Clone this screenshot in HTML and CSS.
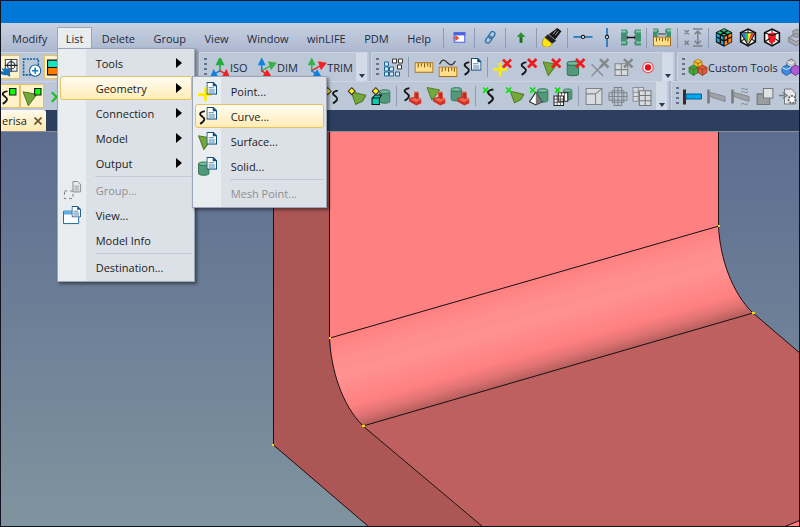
FILE: index.html
```html
<!DOCTYPE html>
<html lang="en">
<head>
	<meta charset="utf-8">
	<title>Model viewer</title>
	<link rel="stylesheet" href="styles.css">
</head>
<body>
	<svg class="sprite" aria-hidden="true">
		<!-- shared parts -->
		<symbol id="doc" viewBox="0 0 10 12"><path d="M.5.5h6l3 3v8h-9z" fill="#fff" stroke="#0f4f80"/><path d="M6 0v4h4z" fill="#0f4f80"/><path d="M2 5.500h5M2 7.500h6M2 9.500h6" stroke="#4d83ab"/></symbol>
		<symbol id="redx" viewBox="0 0 10 10"><path d="M1 1l8 8M9 1L1 9" stroke="#ee1c1c" stroke-width="2.600"/></symbol>
		<symbol id="greenx" viewBox="0 0 6 6"><path d="M.5.5l5 5M5.500.5l-5 5" stroke="#0be00b" stroke-width="1.600"/></symbol>
		<symbol id="squiggle" viewBox="0 0 8 14"><path d="M6.500 1C1 2 1 4 4 6s3 4-2 7" fill="none" stroke="#151515" stroke-width="1.700"/></symbol>
		<symbol id="tri" viewBox="0 0 14 14"><path d="M.5.5L13.500 3 5.500 13.500z" fill="#75a83c" stroke="#4f7c26"/></symbol>
		<symbol id="patch" viewBox="0 0 14 13"><path d="M.5 1.500L13.500 4.500l-3 5-6 3z" fill="#75a83c" stroke="#4f7c26"/></symbol>
		<symbol id="cyl" viewBox="0 0 12 15"><path d="M.5 2.500v10c0 2.500 11 2.500 11 0v-10z" fill="#52987b" stroke="#2f7257"/><ellipse cx="6" cy="2.500" rx="5.500" ry="2" fill="#78b89c" stroke="#2f7257"/></symbol>
		<symbol id="diamond" viewBox="0 0 8 8"><path d="M4 .7L7.300 4 4 7.300.7 4z" fill="#ffee10" stroke="#333"/></symbol>
		<symbol id="brick" viewBox="0 0 12 13"><path d="M5 0l4 0 0 5 3 2v4l-5 2-7-4V6l5-1z" fill="#cf3325"/><path d="M5 0l1 6-5 1 6 3 5-3-3-2V0z" fill="#ee6551"/><path d="M6 1v5l3 1V1z" fill="#bd281b"/></symbol>
		<symbol id="cube" viewBox="0 0 18 18"><path d="M9 1l7 3.500v8.500l-7 4-7-4V4.500z" fill="#fff" stroke="#111" stroke-width="1.500"/></symbol>
		<symbol id="rule" viewBox="0 0 18 10"><path d="M.5.5h17v9H.5z" fill="#ffdf8c" stroke="#a86d10"/><path d="M3.500 1v4M6.500 1v3M9.500 1v4M12.500 1v3M15 1v4" stroke="#8b5a0a"/></symbol>

		<!-- menu bar icons -->
		<symbol id="i-import" viewBox="0 0 18 18"><path d="M4.500 4.500h10v9h-10z" fill="#fff" stroke="#4763e0"/><path d="M4 4h11v3H4z" fill="#4763e0"/><path d="M3 9.500h4M6 7.500l2.500 2L6 11.500z" fill="#ef4b29" stroke="#ef4b29"/></symbol>
		<symbol id="i-link" viewBox="0 0 18 18"><g fill="none" stroke="#2f78ad" stroke-width="1.300"><rect x="8.500" y="3" width="4.500" height="7" rx="2.200" transform="rotate(35 10.500 6.500)"/><rect x="5.500" y="7.500" width="4.500" height="7" rx="2.200" transform="rotate(35 7.700 11)"/></g></symbol>
		<symbol id="i-up" viewBox="0 0 18 18"><path d="M9 4l4 4.500h-2.500V14h-3V8.500H5z" fill="#2c8e2c"/><path d="M9 9v5" stroke="#174f17"/></symbol>
		<symbol id="i-torch" viewBox="0 0 18 18"><path d="M14 0l4 3-6 8-6-5z" fill="#151515"/><path d="M5 6l8 6-4 3-7-6z" fill="#222"/><path d="M2 9l7 6c-1 4-8 4-9 1 0-3 0-5 2-7z" fill="#ffe414" stroke="#a48900" stroke-width=".7"/><path d="M10 6l3-4M12 7l3-4" stroke="#ccc" stroke-width=".7"/></symbol>
		<symbol id="i-hline" viewBox="0 0 18 18"><path d="M0 8.500h18" stroke="#1570b8" stroke-width="1.500"/><circle cx="9" cy="8.500" r="1.500" fill="#fff" stroke="#111"/></symbol>
		<symbol id="i-vline" viewBox="0 0 18 18"><path d="M9 0v18" stroke="#1570b8" stroke-width="1.500"/><circle cx="9" cy="8.500" r="1.500" fill="#fff" stroke="#111"/></symbol>
		<symbol id="i-span" viewBox="0 0 20 18"><path d="M0 1h6l1 3-2 4v3l2 3-1 3H0zM20 1h-6l-1 3 2 4v3l-2 3 1 3h6z" fill="#3d9270"/><path d="M0 3h5M0 14h5M15 3h5M15 14h5" stroke="#8cc4aa" stroke-width="2"/><path d="M6 9h8" stroke="#111" stroke-width="1.500"/><path d="M6 7v4M14 7v4" stroke="#111"/></symbol>
		<symbol id="i-spanrule" viewBox="0 0 20 18"><path d="M1 0h5l1 3-2 3 2 3H1zM19 0h-5l-1 3 2 3-2 3h6z" fill="#3d9270"/><path d="M1 2h4M15 2h4" stroke="#8cc4aa" stroke-width="2"/><path d="M6 5.500h8" stroke="#333"/><use href="#rule" x="1" y="8" width="18" height="10"/></symbol>
		<symbol id="i-height" viewBox="0 0 18 18"><path d="M1 2l4 4M5 2L1 6M1 12l4 4M5 12l-4 4M9 1h9M9 17h9M13.500 3v12M10.500 6l3-3 3 3M10.500 12l3 3 3-3" fill="none" stroke="#7b8187" stroke-width="1.400"/></symbol>
		<symbol id="i-cube1" viewBox="0 0 18 18"><use href="#cube"/><path d="M2 5l7 3v8l-7-4z" fill="#16a6dc"/><path d="M9 8l7-3v8l-7 4z" fill="#ff8a1e"/><path d="M9 1l7 3.500L9 8 2 4.500z" fill="#28c37b"/><path d="M5.500 2.500l7 4v8M12.500 2.500l-7 4v8M2 8.500l7 4 7-4M9 8v9M2 4.500L9 8l7-3.500" fill="none" stroke="#111" stroke-width="1.300"/></symbol>
		<symbol id="i-cube2" viewBox="0 0 18 18"><use href="#cube"/><path d="M3 5h4v7z" fill="#2274e0"/><path d="M6 5h4l-1 9-2-2z" fill="#20bd5d"/><path d="M9 5h4l-4 9z" fill="#ffe629"/><path d="M12 5h3l-6 9z" fill="#ef3322"/><path d="M2 4.500h14L9 16zM9 1v4M2 13l4-3M16 13l-4-3" fill="none" stroke="#111"/></symbol>
		<symbol id="i-cube3" viewBox="0 0 18 18"><use href="#cube"/><path d="M5 6l4-2 4 1-1 8-4 2-2-2z" fill="#ec1d24"/><path d="M2 4.500L9 7l7-2.500M2 13l5-3M16 13l-4-3M9 1v3M9 14v3" fill="none" stroke="#111"/></symbol>
		<symbol id="i-cube4" viewBox="0 0 18 18"><path d="M2 9l7-4 7 4-7 4zM2 9v4l7 4 7-4V9M6 3l4-2 4 2v4l-4 2-4-2z" fill="#a7abb0" stroke="#858a91"/></symbol>

		<!-- toolbar icons -->
		<symbol id="i-rotate" viewBox="0 0 18 18"><path d="M6.500 1.500h11v11h-11z" fill="#eef3f8" stroke="#454f5c"/><circle cx="12" cy="7" r="3.500" fill="none" stroke="#222"/><path d="M12 1v12M6 7h12" stroke="#222"/><path d="M0 8c0 4 3 5 5 5l-2-3h8v8l-3-2c-4 1-7-1-8-4z" fill="#1972c0"/></symbol>
		<symbol id="i-zoombox" viewBox="0 0 18 18"><path d="M1 1h14v15H1z" fill="none" stroke="#16619c" stroke-width="1.500" stroke-dasharray="2 1"/><circle cx="12" cy="12" r="5.300" fill="#fff" stroke="#16619c"/><path d="M12 9v6M9 12h6" stroke="#1b7bc2" stroke-width="1.500"/></symbol>
		<symbol id="i-colors" viewBox="0 0 18 18"><path d="M1 2h16v7H1z" fill="#1de0bc" stroke="#111"/><path d="M1 9h16v7H1z" fill="#ff7c00" stroke="#111"/></symbol>
		<symbol id="i-iso" viewBox="0 0 18 18"><path d="M9 13V5M6 6l3-6 3 6z" fill="#22ad3d" stroke="#22ad3d" stroke-width="1.500"/><path d="M9 12l-5 3M1 17l2-5 3 5z" fill="#1183df" stroke="#1183df" stroke-width="1.500"/><path d="M9 12l5 3M17 17l-5 0 3-5z" fill="#ee2525" stroke="#ee2525" stroke-width="1.500"/></symbol>
		<symbol id="i-dim" viewBox="0 0 18 18"><path d="M4 13V5M1.500 6L4 1l2.500 5z" fill="#1183df" stroke="#1183df" stroke-width="1.500"/><path d="M4 12l9-5M11 4l6 1-4 5z" fill="#38b248" stroke="#38b248" stroke-width="1.500"/><path d="M4 12l5 4M6 17l3-5 3 5z" fill="#ee2525" stroke="#ee2525" stroke-width="1.500"/></symbol>
		<symbol id="i-trim" viewBox="0 0 18 18"><path d="M4 13V5M1.500 6L4 1l2.500 5z" fill="#38b248" stroke="#38b248" stroke-width="1.500"/><path d="M4 12l9-5M11 4l6 1-4 5z" fill="#ee2525" stroke="#ee2525" stroke-width="1.500"/><path d="M4 12l5 4M6 17l3-5 3 5z" fill="#1183df" stroke="#1183df" stroke-width="1.500"/></symbol>
		<symbol id="i-blocks" viewBox="0 0 20 18"><g fill="#d7e7f2" stroke="#1c6595"><path d="M1.500 3.500h4v4h-4zM1.500 8.500h4v4h-4zM1.500 13.500h4v4h-4zM6.500 8.500h4v4h-4zM6.500 13.500h4v4h-4zM12.500 13.500h4v4h-4z"/></g><path d="M9.500.5h4v4h-4zM15.500.5h4v4h-4zM14.500 6.500h4v4h-4z" fill="#fff" stroke="#333"/></symbol>
		<symbol id="i-ruler" viewBox="0 0 18 18"><use href="#rule" y="3" width="18" height="12"/></symbol>
		<symbol id="i-curverule" viewBox="0 0 18 18"><path d="M1 6c3-6 5-4 8-1s5 1 7-2" fill="none" stroke="#333" stroke-width="1.200"/><use href="#rule" y="8" width="18" height="10"/></symbol>
		<symbol id="i-curvedoc" viewBox="0 0 18 18"><use href="#squiggle" x="0" y="3" width="8" height="14"/><use href="#doc" x="8" y="0" width="10" height="12"/></symbol>
		<symbol id="i-pointx" viewBox="0 0 20 18"><path d="M7 4v14M0 11h14" stroke="#ffed00" stroke-width="2.500"/><use href="#redx" x="9" y="0" width="10" height="10"/></symbol>
		<symbol id="i-curvex" viewBox="0 0 18 18"><use href="#squiggle" x="1" y="3" width="8" height="14"/><use href="#redx" x="8" y="0" width="10" height="10"/></symbol>
		<symbol id="i-surfx" viewBox="0 0 18 18"><use href="#tri" x="0" y="3" width="14" height="14"/><use href="#redx" x="8" y="0" width="10" height="10"/></symbol>
		<symbol id="i-solidx" viewBox="0 0 18 18"><use href="#cyl" x="0" y="2" width="12" height="16"/><use href="#redx" x="8" y="0" width="10" height="10"/></symbol>
		<symbol id="i-greyx" viewBox="0 0 18 18"><path d="M1 6l11 11M12 6L1 17" stroke="#8a8d91" stroke-width="1.300"/><path d="M9 1l8 8M17 1L9 9" stroke="#85888c" stroke-width="2.400"/></symbol>
		<symbol id="i-gridx" viewBox="0 0 18 18"><path d="M.5 5.500h12v11H.5zM.5 11h12M6.500 5.500v11" fill="#d7dadd" stroke="#7f8387"/><path d="M9 1l8 8M17 1L9 9" stroke="#85888c" stroke-width="2.400"/></symbol>
		<symbol id="i-record" viewBox="0 0 18 18"><circle cx="9" cy="9" r="5" fill="#fff" stroke="#ef4444"/><circle cx="9" cy="9" r="3" fill="#e60f1c"/></symbol>
		<symbol id="i-custom" viewBox="0 0 20 18"><g stroke-width=".7"><path d="M6 3l4-2.500L14 3v5l-4 2-4-2z" fill="#f8be26" stroke="#a7790c"/><path d="M1 9l4.500-2.500L10 9v5l-4.500 3L1 14z" fill="#46a53f" stroke="#256b20"/><path d="M10 9l4.500-2.500L19 9v5l-4.500 3-4.500-3z" fill="#e6553c" stroke="#9b2516"/><path d="M6 3l4 2 4-2M10 5v5M1 9l4.500 2L10 9l4.500 2L19 9M5.500 11v6M14.500 11v6" fill="none" stroke="#6d4a20"/></g></symbol>
		<symbol id="i-custom2" viewBox="0 0 20 18"><g stroke-width=".8"><path d="M6 3l4-2.500L14 3v5l-4 2-4-2z" fill="#c3c6cb" stroke="#555"/><path d="M1 9l4.500-2.500L10 9v5l-4.500 3L1 14z" fill="#3b8be5" stroke="#1e508c"/><path d="M10 9l4.500-2.500L19 9v5l-4.500 3-4.500-3z" fill="#ad5bd6" stroke="#652a85"/><path d="M1 9l4.500 2L10 9M6 3l4 2 4-2" fill="none" stroke="#fff"/></g></symbol>
		<symbol id="i-curveg" viewBox="0 0 18 18"><use href="#squiggle" x="2" y="3" width="8" height="14"/><path d="M10.500 1.500h6v6h-6z" fill="#0aff0a" stroke="#111"/></symbol>
		<symbol id="i-surfg" viewBox="0 0 18 18"><use href="#tri" x="0" y="4" width="14" height="14"/><path d="M11.500 1.500h6v6h-6z" fill="#0aff0a" stroke="#111"/></symbol>
		<symbol id="i-green" viewBox="0 0 18 18"><path d="M5 5l9 9M14 5l-9 9" stroke="#1dbd1d" stroke-width="2"/></symbol>
		<symbol id="i-curved" viewBox="0 0 18 18"><use href="#diamond" x="0" y="0" width="8" height="8"/><use href="#squiggle" x="7" y="2" width="8" height="15"/></symbol>
		<symbol id="i-surfd" viewBox="0 0 18 18"><use href="#patch" x="3" y="3" width="15" height="14"/><use href="#diamond" x="0" y="0" width="8" height="8"/></symbol>
		<symbol id="i-solidd" viewBox="0 0 18 18"><use href="#cyl" x="7" y="1" width="11" height="16"/><path d="M.5 10.500l3-3h6l-2 3v6h-7zM.5 10.500h7" fill="#10c9ad" stroke="#111"/><use href="#diamond" x="0" y="0" width="8" height="8"/></symbol>
		<symbol id="i-curveb" viewBox="0 0 18 18"><use href="#squiggle" x="0" y="0" width="8" height="14"/><use href="#brick" x="6" y="4" width="12" height="14"/></symbol>
		<symbol id="i-surfb" viewBox="0 0 18 18"><use href="#tri" x="0" y="0" width="13" height="13"/><use href="#brick" x="6" y="4" width="12" height="14"/></symbol>
		<symbol id="i-solidb" viewBox="0 0 18 18"><use href="#cyl" x="0" y="0" width="11" height="14"/><use href="#brick" x="6" y="4" width="12" height="14"/></symbol>
		<symbol id="i-curven" viewBox="0 0 18 18"><use href="#greenx" x="1" y="0" width="6" height="6"/><use href="#squiggle" x="4" y="1" width="9" height="16"/></symbol>
		<symbol id="i-surfn" viewBox="0 0 18 18"><use href="#patch" x="4" y="2" width="14" height="14"/><use href="#greenx" x="0" y="0" width="6" height="6"/></symbol>
		<symbol id="i-solidn" viewBox="0 0 18 18"><use href="#cyl" x="7" y="0" width="11" height="16"/><path d="M6 5l6 9-6 3-6-3z" fill="#fff" stroke="#222"/><path d="M6 5l6 9-6 3z" fill="#777"/><use href="#greenx" x="0" y="0" width="6" height="6"/></symbol>
		<symbol id="i-meshn" viewBox="0 0 18 18"><use href="#cyl" x="9" y="0" width="9" height="14"/><path d="M4.500 5.500h9v8h-9zM.5 8.500h9v9h-9z" fill="#fff" stroke="#222"/><path d="M.5 11.500h9M.5 14.500h9M3.500 8.500v9M6.500 8.500v9M7.500 5.500v3M10.500 5.500v8" fill="none" stroke="#444" stroke-width=".8"/><use href="#greenx" x="1" y="0" width="6" height="6"/></symbol>
		<symbol id="i-grid1" viewBox="0 0 18 18"><path d="M1.500 1.500h15v15h-15zM1.500 6.500h9v10M10.500 6.500l6-5" fill="#d9dcdf" stroke="#808489"/></symbol>
		<symbol id="i-grid2" viewBox="0 0 18 18"><path d="M5.500.5h7v17h-7zM.5 5.500h17v7H.5zM9 .5v17M.5 9h17M3.500 3.500h11v11h-11z" fill="none" stroke="#808489"/></symbol>
		<symbol id="i-grid3" viewBox="0 0 18 18"><path d="M.5.500h10v13H.5zM.5 5h10M.5 9h10M5.500.5v13" fill="#d9dcdf" stroke="#8d9196"/><path d="M6.500 3.500h11v14h-11zM6.500 8h11M6.500 13h11M12 3.500v14" fill="#d9dcdf" stroke="#74787d"/></symbol>
		<symbol id="i-beam" viewBox="0 0 20 18"><path d="M1.500 2v15" stroke="#3a2925" stroke-width="3"/><path d="M3 6.500h15.500v5H3z" fill="#00a9ef" stroke="#075c91"/></symbol>
		<symbol id="i-beam2" viewBox="0 0 20 18"><path d="M1.500 2v14" stroke="#777b80" stroke-width="2.500"/><path d="M3 5l15 4v5L3 9z" fill="#a0a4a9" stroke="#84888d"/></symbol>
		<symbol id="i-beam3" viewBox="0 0 20 18"><path d="M1.500 2v14" stroke="#777b80" stroke-width="2.500"/><path d="M3 5l15 4v5L3 9z" fill="#a0a4a9" stroke="#84888d"/><path d="M10 2c3-3 4 2 7-1M10 5c3-3 4 2 7-1M10 17c3-3 4 2 7-1" fill="none" stroke="#85898e"/></symbol>
		<symbol id="i-copy" viewBox="0 0 18 18"><path d="M1.500 6.500h12v10h-12z" fill="#9a9ea3" stroke="#74787d"/><path d="M7.500 1.500h9v9h-9z" fill="#dfe2e5" stroke="#74787d"/></symbol>
		<symbol id="i-gear" viewBox="0 0 20 18"><path d="M5.500 1.500h7l4 4v11h-11z" fill="#e5e7e9" stroke="#777b80"/><path d="M0 8h6M4 5l4 3-4 3" fill="none" stroke="#777b80" stroke-width="1.500"/><circle cx="13" cy="12" r="3.500" fill="#fff" stroke="#666a70" stroke-width="2" stroke-dasharray="2 1"/></symbol>

		<!-- drop-down menu icons -->
		<symbol id="m-point" viewBox="0 0 18 18"><path d="M7 5v13M0 12h13" stroke="#ffed00" stroke-width="2.500"/><use href="#doc" x="8" y="0" width="10" height="12"/></symbol>
		<symbol id="m-surface" viewBox="0 0 18 18"><use href="#tri" x="0" y="3" width="14" height="14"/><use href="#doc" x="8" y="0" width="10" height="12"/></symbol>
		<symbol id="m-solid" viewBox="0 0 18 18"><use href="#cyl" x="0" y="4" width="11" height="14"/><use href="#doc" x="8" y="0" width="10" height="12"/></symbol>
		<symbol id="m-group" viewBox="0 0 20 20"><path d="M1.500 10.500h9v8h-9z" fill="none" stroke="#777" stroke-dasharray="3 3"/><path d="M10.500.5h5l3 3v8h-8z" fill="#e6e8eb" stroke="#85898e"/><path d="M12 5.500h5M12 7.500h5M12 9.500h5" stroke="#9a9da2"/></symbol>
		<symbol id="m-view" viewBox="0 0 20 20"><path d="M.5 5.500h16v13H.5z" fill="#fff" stroke="#15659b"/><path d="M1 5h15v4H1z" fill="#5daee5"/><use href="#doc" x="9" y="0" width="10" height="12"/></symbol>
	</svg>

	<div class="titlebar"></div>

	<header class="menubar">
		<nav class="menus">
			<div class="menu"><button class="menu-title">Modify</button></div>
			<div class="menu open">
				<button class="menu-title">List</button>
				<ul class="dropdown">
					<li><button class="entry">Tools<span class="arrow"></span></button></li>
					<li class="parent">
						<button class="entry active">Geometry<span class="arrow"></span></button>
						<ul class="dropdown submenu">
							<li><button class="entry"><svg class="entry-icon"><use href="#m-point"/></svg>Point...</button></li>
							<li><button class="entry active"><svg class="entry-icon"><use href="#i-curvedoc"/></svg>Curve...</button></li>
							<li><button class="entry"><svg class="entry-icon"><use href="#m-surface"/></svg>Surface...</button></li>
							<li><button class="entry"><svg class="entry-icon"><use href="#m-solid"/></svg>Solid...</button></li>
							<li class="divider"></li>
							<li><button class="entry" disabled>Mesh Point...</button></li>
						</ul>
					</li>
					<li><button class="entry">Connection<span class="arrow"></span></button></li>
					<li><button class="entry">Model<span class="arrow"></span></button></li>
					<li><button class="entry">Output<span class="arrow"></span></button></li>
					<li class="divider"></li>
					<li><button class="entry" disabled><svg class="entry-icon"><use href="#m-group"/></svg>Group...</button></li>
					<li><button class="entry"><svg class="entry-icon"><use href="#m-view"/></svg>View...</button></li>
					<li><button class="entry">Model Info</button></li>
					<li class="divider"></li>
					<li><button class="entry">Destination...</button></li>
				</ul>
			</div>
			<div class="menu"><button class="menu-title">Delete</button></div>
			<div class="menu"><button class="menu-title">Group</button></div>
			<div class="menu"><button class="menu-title">View</button></div>
			<div class="menu"><button class="menu-title">Window</button></div>
			<div class="menu"><button class="menu-title">winLIFE</button></div>
			<div class="menu"><button class="menu-title">PDM</button></div>
			<div class="menu"><button class="menu-title">Help</button></div>
		</nav>
		<span class="sep"></span>
		<button class="tool" aria-label="Import"><svg><use href="#i-import"/></svg></button>
		<span class="sep"></span>
		<button class="tool" aria-label="Link"><svg><use href="#i-link"/></svg></button>
		<span class="sep"></span>
		<button class="tool" aria-label="Up"><svg><use href="#i-up"/></svg></button>
		<span class="sep"></span>
		<button class="tool" aria-label="Highlight"><svg><use href="#i-torch"/></svg></button>
		<span class="sep"></span>
		<button class="tool" aria-label="Horizontal"><svg><use href="#i-hline"/></svg></button>
		<button class="tool" aria-label="Vertical"><svg><use href="#i-vline"/></svg></button>
		<button class="tool" aria-label="Span"><svg><use href="#i-span"/></svg></button>
		<span class="sep"></span>
		<button class="tool" aria-label="Measure span"><svg><use href="#i-spanrule"/></svg></button>
		<span class="sep"></span>
		<button class="tool" aria-label="Height"><svg><use href="#i-height"/></svg></button>
		<span class="sep"></span>
		<button class="tool" aria-label="Mesh cube"><svg><use href="#i-cube1"/></svg></button>
		<button class="tool" aria-label="Contour cube"><svg><use href="#i-cube2"/></svg></button>
		<button class="tool" aria-label="Section cube"><svg><use href="#i-cube3"/></svg></button>
		<button class="tool" aria-label="Exploded cube"><svg><use href="#i-cube4"/></svg></button>
	</header>

	<div class="toolrow">
		<div class="toolbar views">
			<button class="tool on" aria-label="Rotate"><svg><use href="#i-rotate"/></svg></button>
			<button class="tool" aria-label="Zoom box"><svg><use href="#i-zoombox"/></svg></button>
			<button class="tool on" aria-label="Colors"><svg><use href="#i-colors"/></svg></button>
		</div>
		<div class="toolbar axes">
			<span class="grip"></span>
			<div class="tools">
				<button class="tool wide"><svg><use href="#i-iso"/></svg>ISO</button>
				<button class="tool wide"><svg><use href="#i-dim"/></svg>DIM</button>
				<button class="tool wide"><svg><use href="#i-trim"/></svg>TRIM</button>
			</div>
			<button class="overflow" aria-label="More"></button>
		</div>
		<div class="toolbar geometry">
			<span class="grip"></span>
			<div class="tools">
				<button class="tool" aria-label="Blocks"><svg><use href="#i-blocks"/></svg></button>
				<span class="sep"></span>
				<button class="tool" aria-label="Ruler"><svg><use href="#i-ruler"/></svg></button>
				<button class="tool" aria-label="Curve length"><svg><use href="#i-curverule"/></svg></button>
				<button class="tool" aria-label="List curve"><svg><use href="#i-curvedoc"/></svg></button>
				<span class="sep"></span>
				<button class="tool" aria-label="Delete point"><svg><use href="#i-pointx"/></svg></button>
				<button class="tool" aria-label="Delete curve"><svg><use href="#i-curvex"/></svg></button>
				<button class="tool" aria-label="Delete surface"><svg><use href="#i-surfx"/></svg></button>
				<button class="tool" aria-label="Delete solid"><svg><use href="#i-solidx"/></svg></button>
				<button class="tool" aria-label="Delete node"><svg><use href="#i-greyx"/></svg></button>
				<button class="tool" aria-label="Delete element"><svg><use href="#i-gridx"/></svg></button>
				<button class="tool" aria-label="Record"><svg><use href="#i-record"/></svg></button>
			</div>
			<button class="overflow" aria-label="More"></button>
		</div>
		<div class="toolbar custom">
			<span class="grip"></span>
			<button class="tool wide"><svg><use href="#i-custom"/></svg>Custom Tools</button>
			<button class="tool" aria-label="Tool sets"><svg><use href="#i-custom2"/></svg></button>
		</div>
	</div>

	<div class="toolrow">
		<div class="toolbar entities">
			<div class="tools">
				<button class="tool on" aria-label="Show curves"><svg><use href="#i-curveg"/></svg></button>
				<button class="tool on" aria-label="Show surfaces"><svg><use href="#i-surfg"/></svg></button>
				<button class="tool" aria-label="Show nodes"><svg><use href="#i-green"/></svg></button>
			</div>
			<div class="tools end">
				<button class="tool" aria-label="Curve point"><svg><use href="#i-curved"/></svg></button>
				<button class="tool" aria-label="Surface point"><svg><use href="#i-surfd"/></svg></button>
				<button class="tool" aria-label="Solid point"><svg><use href="#i-solidd"/></svg></button>
				<span class="sep"></span>
				<button class="tool" aria-label="Curve property"><svg><use href="#i-curveb"/></svg></button>
				<button class="tool" aria-label="Surface property"><svg><use href="#i-surfb"/></svg></button>
				<button class="tool" aria-label="Solid property"><svg><use href="#i-solidb"/></svg></button>
				<span class="sep"></span>
				<button class="tool" aria-label="Mesh curve"><svg><use href="#i-curven"/></svg></button>
				<button class="tool" aria-label="Mesh surface"><svg><use href="#i-surfn"/></svg></button>
				<button class="tool" aria-label="Mesh solid"><svg><use href="#i-solidn"/></svg></button>
				<button class="tool" aria-label="Hex mesh"><svg><use href="#i-meshn"/></svg></button>
				<span class="sep"></span>
				<button class="tool" aria-label="Split mesh"><svg><use href="#i-grid1"/></svg></button>
				<button class="tool" aria-label="Refine mesh"><svg><use href="#i-grid2"/></svg></button>
				<button class="tool" aria-label="Copy mesh"><svg><use href="#i-grid3"/></svg></button>
			</div>
			<button class="overflow" aria-label="More"></button>
		</div>
		<div class="toolbar post">
			<span class="grip"></span>
			<button class="tool" aria-label="Beam"><svg><use href="#i-beam"/></svg></button>
			<button class="tool" aria-label="Deform"><svg><use href="#i-beam2"/></svg></button>
			<button class="tool" aria-label="Animate"><svg><use href="#i-beam3"/></svg></button>
			<button class="tool" aria-label="Copy"><svg><use href="#i-copy"/></svg></button>
			<button class="tool" aria-label="Output settings"><svg><use href="#i-gear"/></svg></button>
		</div>
	</div>

	<div class="tabs">
		<div class="tab">erisa
			<button class="close" aria-label="Close"><svg viewBox="0 0 8 8"><path d="M.5.5l7 7M7.500.5l-7 7" stroke="#6d5430" stroke-width="1.700"/></svg></button>
		</div>
	</div>

	<main class="viewport">
		<svg class="model" viewBox="0 0 798 394" preserveAspectRatio="xMinYMin slice">
			<defs>
				<linearGradient id="fillet" gradientUnits="userSpaceOnUse" x1="524" y1="150" x2="550" y2="240">
					<stop offset="0" stop-color="#ff8080"/>
					<stop offset=".2" stop-color="#ff8c8c"/>
					<stop offset=".42" stop-color="#ff9292"/>
					<stop offset=".75" stop-color="#ff8080"/>
					<stop offset=".88" stop-color="#e07373"/>
					<stop offset="1" stop-color="#b35c5c"/>
				</linearGradient>
			</defs>
			<!-- side wall, back wall, floor, fillet -->
			<path d="M272 -2V313L368 395H482L362 294C341 273 330 238 329 206V-2z" fill="#ac5656"/>
			<path d="M328 -2H718V94L329 206z" fill="#ff8080"/>
			<path d="M362 294L752 181 800 222V396H482z" fill="#be6060"/>
			<path d="M329 206L718 94C719 126 731 161 752 181L362 294C341 273 330 238 329 206z" fill="url(#fillet)"/>
			<path d="M780 396L800 388V396z" fill="#ff8080"/>
			<g fill="none" stroke="#1c1010">
				<path d="M272.500 -2V313L368 395M328.500 -2V206C330 238 341 273 362 294L482 395M717.500 -2V94C719 126 731 161 752 181L800 222M329 206L718 94M362 294L752 181M780 396L800 388"/>
			</g>
			<g fill="#f0dc00">
				<path d="M271 312h2v2h-2zM328 205h2v2h-2zM361 293h3v2h-3zM717 93h2v2h-2zM751 180h3v2h-3z"/>
			</g>
		</svg>
	</main>
</body>
</html>
```
FILE: styles.css
```css
*{
	box-sizing: border-box;
}
body{
	margin: 0;
	height: 100vh;
	display: flex;
	flex-direction: column;
	overflow: hidden;
	border: 1px solid #10151e;
	background-color: #2d3e5e;
	font-family: "Open Sans", "Noto Sans", sans-serif;
	font-size: 11px;
	color: #1e2a3c;
}
button{
	border: none;
	padding: 0;
	background: none;
	font: inherit;
	color: inherit;
}
ul{
	list-style: none;
	margin: 0;
	padding: 0;
}
.sprite{
	display: none;
}
.titlebar{
	height: 22px;
	background-color: #0078d7;
}

/* menu bar */
.menubar{
	display: flex;
	align-items: center;
	height: 29px;
	background: linear-gradient(#c8d1e1, #acb8d0);
}
.menus{
	display: flex;
	flex: 0 0 439px;
	justify-content: space-between;
	padding-left: 2px;
}
.menu{
	position: relative;
}
.menu-title{
	display: block;
	height: 21px;
	padding: 0 8px;
	border: 1px solid transparent;
	border-bottom: none;
}
.open .menu-title{
	background-color: #e9edf0;
	border-color: #9ba7b7;
}
.dropdown{
	position: absolute;
	z-index: 2;
	top: 100%;
	left: 0;
	width: 138px;
	display: flex;
	flex-direction: column;
	gap: 1px;
	padding: 2px;
	border: 1px solid #9ba7b7;
	background: linear-gradient(to right, #e9edf0 28px, #dce1e8 28px);
	box-shadow: 2px 2px 3px rgba(0, 0, 0, 0.45);
	color: #1b1b1b;
}
.parent{
	position: relative;
}
.submenu{
	top: 0;
	left: 132px;
	width: 135px;
}
.entry{
	position: relative;
	display: flex;
	align-items: center;
	width: 100%;
	height: 24px;
	padding: 0 9px 0 35px;
	border: 1px solid transparent;
	border-radius: 3px;
	text-align: left;
}
.entry.active{
	border-color: #e5c365;
	background: linear-gradient(#fffcf3, #ffecb5);
}
.entry:disabled{
	color: #8d8f94;
}
.entry-icon{
	position: absolute;
	left: 2px;
	width: 19px;
	height: 19px;
}
.arrow{
	margin-left: auto;
	border: 5px solid transparent;
	border-left: 6px solid #000;
	border-right: none;
}
.divider{
	height: 1px;
	margin-left: 35px;
	background-color: #c5cbd6;
}

/* toolbars */
.toolrow{
	display: flex;
	gap: 2px;
	height: 29px;
	background-color: #aab6cb;
}
.toolbar{
	display: flex;
	align-items: center;
	padding: 0 2px;
	border-top: 1px solid #cdd5e2;
	border-left: 1px solid #cdd5e2;
	border-radius: 2px;
	background-color: #bcc7d8;
}
.views{
	flex: 0 0 202px;
	margin-left: -6px;
	padding: 0;
}
.axes{
	flex: 0 0 170px;
}
.geometry{
	flex: 0 0 304px;
}
.custom, .post{
	flex: 1;
}
.entities{
	flex: 0 0 674px;
	margin-left: -6px;
	padding-left: 0;
}
.tools{
	display: flex;
	flex: 1;
	align-items: center;
	justify-content: space-between;
}
.entities .tools{
	flex: none;
}
.entities .end{
	margin-left: auto;
}
.tool{
	display: flex;
	flex: none;
	align-items: center;
	justify-content: center;
	width: 24px;
	height: 24px;
	white-space: nowrap;
}
.tool svg{
	flex: none;
	width: 20px;
	height: 19px;
}
.wide{
	width: auto;
	padding: 0 1px;
}
.on{
	border: 1px solid #e5c365;
	background-color: #fff1c9;
}
.sep{
	flex: none;
	width: 1px;
	height: 20px;
	margin: 0 3px;
	background-color: #8e9bb2;
}
.grip{
	flex: none;
	width: 3px;
	height: 19px;
	margin: 0 2px;
	background: repeating-linear-gradient(#65728a 0 2px, transparent 2px 5px);
}
.overflow{
	display: flex;
	flex: none;
	align-self: stretch;
	align-items: flex-end;
	justify-content: center;
	width: 11px;
	margin-left: 2px;
	padding-bottom: 3px;
	background-color: #d3dbe8;
}
.overflow::after{
	content: "";
	border: 3px solid transparent;
	border-top: 4px solid #2a3850;
	border-bottom: none;
}

/* document tabs */
.tabs{
	display: flex;
	height: 22px;
	border-bottom: 1px solid #8a8f99;
}
.tab{
	display: flex;
	align-items: center;
	gap: 7px;
	padding: 0 4px 0 1px;
	border-radius: 0 2px 0 0;
	background: linear-gradient(#fffaee, #ffe9ae);
	color: #1b1b1b;
}
.close{
	display: flex;
}
.close svg{
	width: 8px;
	height: 8px;
}

.viewport{
	flex: 1;
	min-height: 0;
	background: linear-gradient(#5c6d90, #80949f);
}
.model{
	display: block;
	width: 100%;
	height: 100%;
}
```
